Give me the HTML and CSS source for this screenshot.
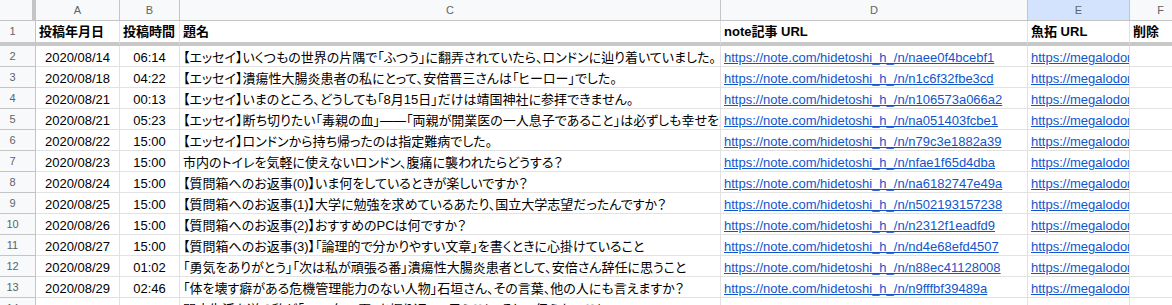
FILE: index.html
```html
<!DOCTYPE html>
<html lang="ja">
<head>
<meta charset="utf-8">
<title>Sheet</title>
<link rel="stylesheet" href="styles.css">
</head>
<body>
<div class="sheet">
  <div class="row colhead">
    <div class="corner"></div>
    <div class="ch">A</div>
    <div class="ch">B</div>
    <div class="ch">C</div>
    <div class="ch">D</div>
    <div class="ch sel">E</div>
    <div class="ch">F</div>
  </div>
  <div class="row frozen">
    <div class="rh">1</div>
    <div class="c b">投稿年月日</div>
    <div class="c b">投稿時間</div>
    <div class="c b">題名</div>
    <div class="c b">note記事 URL</div>
    <div class="c b">魚拓 URL</div>
    <div class="c b">削除</div>
  </div>
  <div class="row">
    <div class="rh">2</div>
    <div class="c ctr">2020/08/14</div>
    <div class="c ctr">06:14</div>
    <div class="c">【エッセイ】いくつもの世界の片隅で「ふつう」に翻弄されていたら、ロンドンに辿り着いていました。</div>
    <div class="c"><a>https://note.com/hidetoshi_h_/n/naee0f4bcebf1</a></div>
    <div class="c"><a>https://megalodon.jp/2020-0814-0614-00/https://note.com</a></div>
    <div class="c"></div>
  </div>
  <div class="row">
    <div class="rh">3</div>
    <div class="c ctr">2020/08/18</div>
    <div class="c ctr">04:22</div>
    <div class="c">【エッセイ】潰瘍性大腸炎患者の私にとって、安倍晋三さんは「ヒーロー」でした。</div>
    <div class="c"><a>https://note.com/hidetoshi_h_/n/n1c6f32fbe3cd</a></div>
    <div class="c"><a>https://megalodon.jp/2020-0818-0422-00/https://note.com</a></div>
    <div class="c"></div>
  </div>
  <div class="row">
    <div class="rh">4</div>
    <div class="c ctr">2020/08/21</div>
    <div class="c ctr">00:13</div>
    <div class="c">【エッセイ】いまのところ、どうしても「8月15日」だけは靖国神社に参拝できません。</div>
    <div class="c"><a>https://note.com/hidetoshi_h_/n/n106573a066a2</a></div>
    <div class="c"><a>https://megalodon.jp/2020-0821-0013-00/https://note.com</a></div>
    <div class="c"></div>
  </div>
  <div class="row">
    <div class="rh">5</div>
    <div class="c ctr">2020/08/21</div>
    <div class="c ctr">05:23</div>
    <div class="c">【エッセイ】断ち切りたい「毒親の血」——「両親が開業医の一人息子であること」は必ずしも幸せを意味しない</div>
    <div class="c"><a>https://note.com/hidetoshi_h_/n/na051403fcbe1</a></div>
    <div class="c"><a>https://megalodon.jp/2020-0821-0523-00/https://note.com</a></div>
    <div class="c"></div>
  </div>
  <div class="row">
    <div class="rh">6</div>
    <div class="c ctr">2020/08/22</div>
    <div class="c ctr">15:00</div>
    <div class="c">【エッセイ】ロンドンから持ち帰ったのは指定難病でした。</div>
    <div class="c"><a>https://note.com/hidetoshi_h_/n/n79c3e1882a39</a></div>
    <div class="c"><a>https://megalodon.jp/2020-0822-1500-00/https://note.com</a></div>
    <div class="c"></div>
  </div>
  <div class="row">
    <div class="rh">7</div>
    <div class="c ctr">2020/08/23</div>
    <div class="c ctr">15:00</div>
    <div class="c">市内のトイレを気軽に使えないロンドン、腹痛に襲われたらどうする？</div>
    <div class="c"><a>https://note.com/hidetoshi_h_/n/nfae1f65d4dba</a></div>
    <div class="c"><a>https://megalodon.jp/2020-0823-1500-00/https://note.com</a></div>
    <div class="c"></div>
  </div>
  <div class="row">
    <div class="rh">8</div>
    <div class="c ctr">2020/08/24</div>
    <div class="c ctr">15:00</div>
    <div class="c">【質問箱へのお返事(0)】いま何をしているときが楽しいですか？</div>
    <div class="c"><a>https://note.com/hidetoshi_h_/n/na6182747e49a</a></div>
    <div class="c"><a>https://megalodon.jp/2020-0824-1500-00/https://note.com</a></div>
    <div class="c"></div>
  </div>
  <div class="row">
    <div class="rh">9</div>
    <div class="c ctr">2020/08/25</div>
    <div class="c ctr">15:00</div>
    <div class="c">【質問箱へのお返事(1)】大学に勉強を求めているあたり、国立大学志望だったんですか？</div>
    <div class="c"><a>https://note.com/hidetoshi_h_/n/n502193157238</a></div>
    <div class="c"><a>https://megalodon.jp/2020-0825-1500-00/https://note.com</a></div>
    <div class="c"></div>
  </div>
  <div class="row">
    <div class="rh">10</div>
    <div class="c ctr">2020/08/26</div>
    <div class="c ctr">15:00</div>
    <div class="c">【質問箱へのお返事(2)】おすすめのPCは何ですか？</div>
    <div class="c"><a>https://note.com/hidetoshi_h_/n/n2312f1eadfd9</a></div>
    <div class="c"><a>https://megalodon.jp/2020-0826-1500-00/https://note.com</a></div>
    <div class="c"></div>
  </div>
  <div class="row">
    <div class="rh">11</div>
    <div class="c ctr">2020/08/27</div>
    <div class="c ctr">15:00</div>
    <div class="c">【質問箱へのお返事(3)】「論理的で分かりやすい文章」を書くときに心掛けていること</div>
    <div class="c"><a>https://note.com/hidetoshi_h_/n/nd4e68efd4507</a></div>
    <div class="c"><a>https://megalodon.jp/2020-0827-1500-00/https://note.com</a></div>
    <div class="c"></div>
  </div>
  <div class="row">
    <div class="rh">12</div>
    <div class="c ctr">2020/08/29</div>
    <div class="c ctr">01:02</div>
    <div class="c">「勇気をありがとう」「次は私が頑張る番」潰瘍性大腸炎患者として、安倍さん辞任に思うこと</div>
    <div class="c"><a>https://note.com/hidetoshi_h_/n/n88ec41128008</a></div>
    <div class="c"><a>https://megalodon.jp/2020-0829-0102-00/https://note.com</a></div>
    <div class="c"></div>
  </div>
  <div class="row">
    <div class="rh">13</div>
    <div class="c ctr">2020/08/29</div>
    <div class="c ctr">02:46</div>
    <div class="c">「体を壊す癖がある危機管理能力のない人物」石垣さん、その言葉、他の人にも言えますか？</div>
    <div class="c"><a>https://note.com/hidetoshi_h_/n/n9fffbf39489a</a></div>
    <div class="c"><a>https://megalodon.jp/2020-0829-0246-00/https://note.com</a></div>
    <div class="c"></div>
  </div>
  <div class="row">
    <div class="rh">14</div>
    <div class="c ctr">2020/08/30</div>
    <div class="c ctr">04:30</div>
    <div class="c">闘病生活を送る私が「2020年の夏」を振り返って思うこと、そして伝えたいこと</div>
    <div class="c"><a>https://note.com/hidetoshi_h_/n/nb6c55b1c9d40</a></div>
    <div class="c"><a>https://megalodon.jp/2020-0830-0430-00/https://note.com</a></div>
    <div class="c"></div>
  </div>
</div>
</body>
</html>
```
FILE: styles.css
```css
html, body {
  margin: 0;
  padding: 0;
  background: #ffffff;
  overflow: hidden;
}

.sheet {
  width: 1192px;
  font-family: "Liberation Sans", "Noto Sans CJK JP", sans-serif;
  font-size: 13px;
  color: #000000;
  font-feature-settings: "palt" 1;
}

.row {
  display: grid;
  grid-template-columns: 36px 84px 60px 541px 307px 102px 62px;
  height: 21px;
}

.row > div {
  box-sizing: border-box;
  height: 21px;
  overflow: hidden;
  white-space: nowrap;
}

.corner {
  background: #f8f9fa;
  border-right: 4px solid #c4c4c4;
  border-bottom: 1px solid #c4c4c4;
}

.ch {
  background: #f8f9fa;
  border-right: 1px solid #c4c4c4;
  border-bottom: 1px solid #c4c4c4;
  color: #5f6368;
  font-size: 11px;
  line-height: 20px;
  text-align: center;
}

.ch.sel {
  background: #d3e3fd;
}

.rh {
  background: #f8f9fa;
  border-right: 1px solid #c4c4c4;
  border-bottom: 1px solid #c4c4c4;
  color: #5f6368;
  font-size: 11px;
  line-height: 20px;
  text-align: center;
  padding-right: 10px;
}

.c {
  border-right: 1px solid #e2e2e2;
  border-bottom: 1px solid #e2e2e2;
  line-height: 20px;
  padding: 2px 3px 0 3px;
}

.c.ctr {
  text-align: center;
}

.c.b {
  font-weight: bold;
  padding-top: 1px;
}

.c a {
  color: #1155cc;
  text-decoration: underline;
}

.row.frozen {
  height: 25px;
}

.row.frozen > div {
  height: 25px;
  border-bottom: 4px solid #c8c8c8;
}
```
